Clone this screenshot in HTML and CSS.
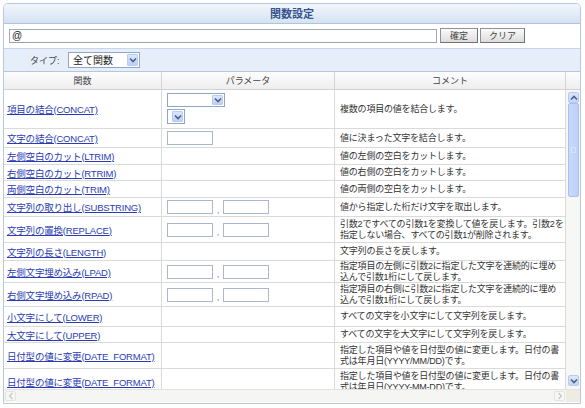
FILE: index.html
```html
<!DOCTYPE html>
<html lang="ja">
<head>
<meta charset="utf-8">
<title>関数設定</title>
<link rel="stylesheet" href="styles.css">
</head>
<body>
<div class="panel">
  <div class="title">関数設定</div>
  <div class="search">
    <input class="search-input" type="text" value="@">
    <button class="btn btn-ok">確定</button>
    <button class="btn btn-clear">クリア</button>
  </div>
  <div class="typerow">
    <span class="type-label">タイプ:</span>
    <div class="select select-type"><span class="select-text">全て関数</span><span class="arrow"><svg width="8" height="6" viewBox="0 0 8 6"><polyline points="1,1.5 4,4.5 7,1.5" fill="none" stroke="#4a5f8c" stroke-width="1.6"/></svg></span></div>
  </div>
  <div class="head">
    <div class="hcell">関数</div>
    <div class="hcell">パラメータ</div>
    <div class="hcell">コメント</div>
    <div class="hcell hcell-sb"></div>
  </div>
  <div class="body">
    <div class="rows">
      <div class="row h39">
        <div class="cell c-fn"><a href="#">項目の結合(CONCAT)</a></div>
        <div class="cell c-par c-stack">
          <div class="select select-a"><span class="select-text"></span><span class="arrow"><svg width="8" height="6" viewBox="0 0 8 6"><polyline points="1,1.5 4,4.5 7,1.5" fill="none" stroke="#4a5f8c" stroke-width="1.6"/></svg></span></div>
          <div class="select select-b"><span class="arrow"><svg width="8" height="6" viewBox="0 0 8 6"><polyline points="1,1.5 4,4.5 7,1.5" fill="none" stroke="#4a5f8c" stroke-width="1.6"/></svg></span></div>
        </div>
        <div class="cell c-com">複数の項目の値を結合します。</div>
      </div>
      <div class="row h19">
        <div class="cell c-fn"><a href="#">文字の結合(CONCAT)</a></div>
        <div class="cell c-par"><span class="box"></span></div>
        <div class="cell c-com">値に決まった文字を結合します。</div>
      </div>
      <div class="row h17">
        <div class="cell c-fn"><a href="#">左側空白のカット(LTRIM)</a></div>
        <div class="cell c-par"></div>
        <div class="cell c-com">値の左側の空白をカットします。</div>
      </div>
      <div class="row h16">
        <div class="cell c-fn"><a href="#">右側空白のカット(RTRIM)</a></div>
        <div class="cell c-par"></div>
        <div class="cell c-com">値の右側の空白をカットします。</div>
      </div>
      <div class="row h17">
        <div class="cell c-fn"><a href="#">両側空白のカット(TRIM)</a></div>
        <div class="cell c-par"></div>
        <div class="cell c-com">値の両側の空白をカットします。</div>
      </div>
      <div class="row h19">
        <div class="cell c-fn"><a href="#">文字列の取り出し(SUBSTRING)</a></div>
        <div class="cell c-par"><span class="box"></span><span class="comma">,</span><span class="box"></span></div>
        <div class="cell c-com">値から指定した桁だけ文字を取出します。</div>
      </div>
      <div class="row h26">
        <div class="cell c-fn"><a href="#">文字列の置換(REPLACE)</a></div>
        <div class="cell c-par"><span class="box"></span><span class="comma">,</span><span class="box"></span></div>
        <div class="cell c-com">引数2ですべての引数1を変換して値を戻します。引数2を<br>指定しない場合、すべての引数1が削除されます。</div>
      </div>
      <div class="row h18">
        <div class="cell c-fn"><a href="#">文字列の長さ(LENGTH)</a></div>
        <div class="cell c-par"></div>
        <div class="cell c-com">文字列の長さを戻します。</div>
      </div>
      <div class="row h22">
        <div class="cell c-fn"><a href="#">左側文字埋め込み(LPAD)</a></div>
        <div class="cell c-par"><span class="box"></span><span class="comma">,</span><span class="box"></span></div>
        <div class="cell c-com">指定項目の左側に引数2に指定した文字を連続的に埋め<br>込んで引数1桁にして戻します。</div>
      </div>
      <div class="row h24">
        <div class="cell c-fn"><a href="#">右側文字埋め込み(RPAD)</a></div>
        <div class="cell c-par"><span class="box"></span><span class="comma">,</span><span class="box"></span></div>
        <div class="cell c-com">指定項目の右側に引数2に指定した文字を連続的に埋め<br>込んで引数1桁にして戻します。</div>
      </div>
      <div class="row h20">
        <div class="cell c-fn"><a href="#">小文字にして(LOWER)</a></div>
        <div class="cell c-par"></div>
        <div class="cell c-com">すべての文字を小文字にして文字列を戻します。</div>
      </div>
      <div class="row h16">
        <div class="cell c-fn"><a href="#">大文字にして(UPPER)</a></div>
        <div class="cell c-par"></div>
        <div class="cell c-com">すべての文字を大文字にして文字列を戻します。</div>
      </div>
      <div class="row h26">
        <div class="cell c-fn"><a href="#">日付型の値に変更(DATE_FORMAT)</a></div>
        <div class="cell c-par"></div>
        <div class="cell c-com">指定した項目や値を日付型の値に変更します。日付の書<br>式は年月日(YYYY/MM/DD)です。</div>
      </div>
      <div class="row h26">
        <div class="cell c-fn"><a href="#">日付型の値に変更(DATE_FORMAT)</a></div>
        <div class="cell c-par"></div>
        <div class="cell c-com">指定した項目や値を日付型の値に変更します。日付の書<br>式は年月日(YYYY-MM-DD)です。</div>
      </div>
    </div>
    <div class="vscroll">
      <div class="vbtn"><svg width="8" height="6" viewBox="0 0 8 6"><polyline points="1,4.5 4,1.5 7,4.5" fill="none" stroke="#4a5f8c" stroke-width="1.6"/></svg></div>
      <div class="thumb"><span class="grip"></span></div>
      <div class="vtrack"></div>
      <div class="vbtn"><svg width="8" height="6" viewBox="0 0 8 6"><polyline points="1,1.5 4,4.5 7,1.5" fill="none" stroke="#4a5f8c" stroke-width="1.6"/></svg></div>
    </div>
  </div>
  <div class="hscroll">
    <div class="hbtn"><svg width="6" height="8" viewBox="0 0 6 8"><polyline points="4.5,1 1.5,4 4.5,7" fill="none" stroke="#c4c4c4" stroke-width="1.2"/></svg></div>
    <div class="htrack"></div>
    <div class="hbtn"><svg width="6" height="8" viewBox="0 0 6 8"><polyline points="1.5,1 4.5,4 1.5,7" fill="none" stroke="#c4c4c4" stroke-width="1.2"/></svg></div>
    <div class="corner"></div>
  </div>
</div>
</body>
</html>
```
FILE: styles.css
```css
* { box-sizing: border-box; }

body {
  margin: 0;
  background: #ffffff;
  font-family: "Liberation Sans", "Noto Sans CJK JP", sans-serif;
  font-size: 9.5px;
  color: #333333;
}

.panel {
  margin: 3px 0 0 3px;
  width: 578px;
  height: 401px;
  border: 1px solid #b7c7dd;
  border-radius: 5px 5px 0 0;
  overflow: hidden;
  display: flex;
  flex-direction: column;
}

.title {
  height: 20px;
  flex: none;
  background: linear-gradient(#f2f6fc, #d6e2f2);
  border-bottom: 1px solid #b2c4dc;
  color: #34548f;
  font-family: "Noto Sans CJK JP", sans-serif;
  font-size: 11px;
  font-weight: bold;
  text-align: center;
  line-height: 19px;
}

.search {
  height: 24px;
  flex: none;
  background: #ffffff;
  display: flex;
  align-items: center;
  padding: 0 0 1px 5px;
}

.search-input {
  width: 428px;
  height: 14px;
  border: 1px solid #a4abb6;
  border-bottom-color: #9aa1ab;
  padding: 0 2px;
  font-family: "Liberation Sans", sans-serif;
  font-size: 10px;
  color: #222;
  outline: none;
}

.btn {
  height: 15px;
  padding: 0;
  border: 1px solid #8e9196;
  border-right-color: #6f7277;
  border-bottom-color: #6f7277;
  background: linear-gradient(#fbfbfb, #dcdcdc);
  font-family: "Noto Sans CJK JP", sans-serif;
  font-size: 9px;
  color: #444;
  line-height: 12px;
}

.btn-ok { width: 38px; margin-left: 3px; }
.btn-clear { width: 45px; margin-left: 2px; }

.typerow {
  height: 24px;
  flex: none;
  background: #e6eef9;
  border-top: 1px solid #c9d5e6;
  border-bottom: 1px solid #b6c6dc;
  display: flex;
  align-items: center;
  padding-left: 26px;
}

.type-label {
  width: 38px;
  color: #444;
  font-size: 9px;
}

.select {
  display: flex;
  align-items: center;
  background: #ffffff;
  border: 1px solid #8fa8c8;
  padding: 1px;
}

.select-text {
  flex: 1;
  padding-left: 3px;
  color: #222;
  font-family: "Noto Sans CJK JP", sans-serif;
  font-size: 10px;
  line-height: 12px;
}

.arrow {
  display: flex;
  align-items: center;
  justify-content: center;
  width: 11px;
  height: 100%;
  background: linear-gradient(#dbe6fc, #bcd0f6);
  border: 1px solid #b9cbef;
  border-radius: 1px;
}

.select-type { width: 72px; height: 16px; }
.select-a { width: 58px; height: 14px; }
.select-b { width: 18px; height: 15px; margin-top: 2px; padding-left: 4px; }

.head {
  height: 18px;
  flex: none;
  display: grid;
  grid-template-columns: 158px 173px 231px 14px;
  background: linear-gradient(#fdfdfd, #eeeeee);
  border-bottom: 1px solid #d2d2d2;
}

.hcell {
  display: flex;
  align-items: center;
  justify-content: center;
  border-right: 1px solid #d4d4d4;
  color: #444;
  font-family: "Noto Sans CJK JP", sans-serif;
  font-size: 9px;
}

.hcell-sb { border-right: none; }

.body {
  height: 299px;
  flex: none;
  display: flex;
  overflow: hidden;
}

.rows {
  width: 562px;
  flex: none;
  overflow: hidden;
}

.row {
  display: grid;
  grid-template-columns: 158px 173px 231px;
  border-bottom: 1px solid #dadada;
}

.h16 { height: 16px; }
.h17 { height: 17px; }
.h18 { height: 18px; }
.h19 { height: 19px; }
.h20 { height: 20px; }
.h22 { height: 22px; }
.h24 { height: 24px; }
.h26 { height: 26px; }
.h39 { height: 39px; }

.cell {
  display: flex;
  align-items: center;
  border-right: 1px solid #dadada;
  white-space: nowrap;
  overflow: hidden;
}

.c-fn { padding-left: 3px; letter-spacing: -0.2px; }
.c-fn a { color: #2a3cb4; text-decoration: underline; }

.c-par { padding-left: 5px; }

.c-stack {
  flex-direction: column;
  align-items: flex-start;
  justify-content: flex-start;
  padding-top: 3px;
}

.c-com {
  padding-left: 5px;
  font-size: 9px;
  letter-spacing: -0.2px;
  line-height: 10.5px;
  color: #333;
}

.box {
  display: block;
  width: 46px;
  height: 14px;
  border: 1px solid #a9b8cb;
  background: #fff;
}

.comma {
  width: 10px;
  text-align: center;
  color: #888;
  padding-top: 4px;
}

.vscroll {
  width: 14px;
  flex: none;
  display: flex;
  flex-direction: column;
  background: #f7f7f5;
  padding: 2px 1px 3px 2px;
}

.vbtn {
  height: 11px;
  flex: none;
  display: flex;
  align-items: center;
  justify-content: center;
  background: linear-gradient(#dce7fd, #c2d4f8);
  border: 1px solid #b7caf0;
  border-radius: 2px;
}

.thumb {
  height: 94px;
  flex: none;
  display: flex;
  align-items: center;
  justify-content: center;
  background: linear-gradient(90deg, #c9d9fa, #bdd0f7);
  border: 1px solid #a9bff0;
  border-radius: 2px;
}

.grip {
  width: 5px;
  height: 6px;
  border: 1px solid #dae5fc;
  border-radius: 1px;
}

.vtrack { flex: 1; }

.hscroll {
  height: 13px;
  flex: none;
  display: flex;
  background: #f5f5f3;
  border-top: 1px solid #e2e2e2;
}

.hbtn {
  width: 11px;
  flex: none;
  display: flex;
  align-items: center;
  justify-content: center;
  margin: 1px 1px;
  border: 1px solid #e4e4e0;
  border-radius: 2px;
  background: #f7f7f5;
}

.htrack { flex: 1; }

.corner {
  width: 14px;
  flex: none;
  background: #eeece2;
}
```
